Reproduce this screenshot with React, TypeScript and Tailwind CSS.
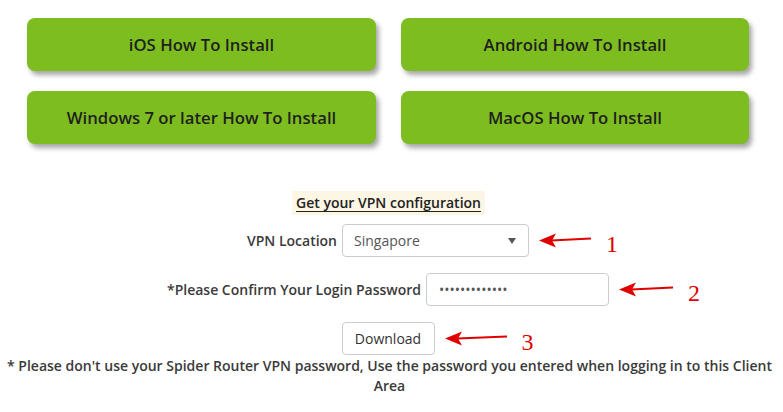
import React from 'react';

const guides = [
  ['iOS How To Install', 'Android How To Install'],
  ['Windows 7 or later How To Install', 'MacOS How To Install'],
];

function Pointer({ n, width }: { n: string; width: number }) {
  return (
    <div className="absolute left-full top-1/2 ml-[10px] flex -translate-y-1/2 items-center gap-[15px]">
      <svg width={width} height="18" viewBox={`0 0 ${width} 18`}>
        <line x1="12" y1="9" x2={width} y2="7" stroke="#e00000" strokeWidth="2" />
        <polygon points="0,9 17,2 13,9 17,16" fill="#e00000" />
      </svg>
      <span className="mt-[5px] text-[24px] leading-none text-[#e00000] [font-family:'Liberation_Serif',serif]">
        {n}
      </span>
    </div>
  );
}

export default function App() {
  return (
    <div className="w-[783px] h-[412px] bg-white text-[#333] [font-family:'Open_Sans',sans-serif]">
      <div className="grid grid-cols-[349px_348px] gap-x-[25px] gap-y-[20px] pl-[27px] pt-[18px]">
        {guides.flat().map((label) => (
          <button
            key={label}
            className="h-[53px] rounded-[8px] bg-[#7dbd1f] text-[16.7px] font-semibold text-[#1f1f1f] shadow-[3px_4px_5px_rgba(0,0,0,0.35)]"
          >
            {label}
          </button>
        ))}
      </div>

      <div className="mt-[47px] flex flex-col items-center pr-[7px]">
        <div className="ml-[1px] bg-[#fcf6e4] px-[4px] py-[2px] text-[14px] font-semibold leading-[20px] text-[#222] underline underline-offset-[3px]">
          Get your VPN configuration
        </div>

        <div className="relative mt-[9px] flex items-center gap-[5px]">
          <label className="text-[14px] font-semibold text-[#3a3a3a]">VPN Location</label>
          <div className="flex h-[33px] w-[187px] items-center justify-between rounded-[4px] border border-[#ccc] pl-[11px] pr-[12px] text-[14px] text-[#555]">
            <span>Singapore</span>
            <svg width="8" height="6" viewBox="0 0 8 6">
              <polygon points="0,0 8,0 4,6" fill="#555" />
            </svg>
          </div>
          <Pointer n="1" width={52} />
        </div>

        <div className="relative mt-[16px] flex items-center gap-[5px]">
          <label className="text-[14px] font-semibold text-[#3a3a3a]">*Please Confirm Your Login Password</label>
          <div className="flex h-[33px] w-[183px] items-center rounded-[4px] border border-[#ccc] px-[12px] text-[14px] text-[#555]">
            •••••••••••••
          </div>
          <Pointer n="2" width={54} />
        </div>

        <div className="relative mt-[16px]">
          <button className="h-[33px] w-[93px] rounded-[4px] border border-[#ccc] bg-white text-[14px] text-[#333]">
            Download
          </button>
          <Pointer n="3" width={62} />
        </div>
      </div>

      <p className="mt-[1px] pl-[4px] pr-[8px] text-center text-[14px] font-semibold leading-[20px] text-[#3a3a3a]">
        * Please don't use your Spider Router VPN password, Use the password you entered when logging in to this Client Area
      </p>
    </div>
  );
}
